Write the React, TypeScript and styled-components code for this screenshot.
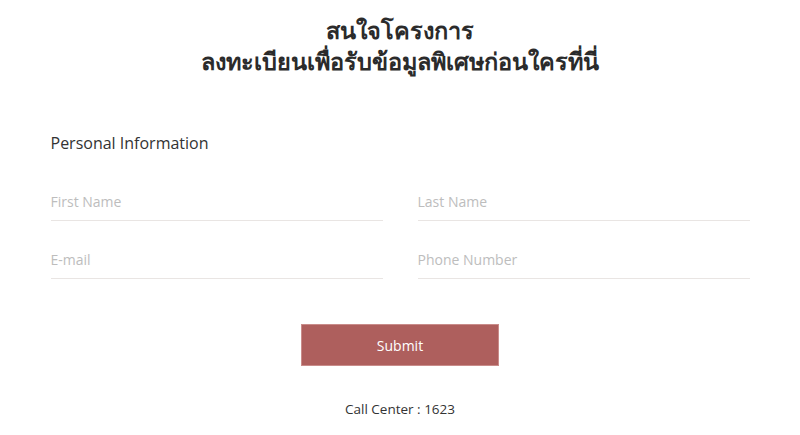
import { createGlobalStyle } from 'styled-components';
import styled from 'styled-components';

const GlobalStyle = createGlobalStyle`
    html, body {
        margin: 0;
        padding: 0;
        background: #ffffff;
    }
    body {
        font-family: 'Open Sans', 'Noto Sans', sans-serif;
        color: #333333;
    }
`;

const Page = styled.div`
    width: 800px;
    height: 435px;
    display: flex;
    flex-direction: column;
    align-items: center;
    box-sizing: border-box;
    padding-top: 15px;
`;

const Title = styled.h1`
    margin: 0;
    font-family: 'Noto Sans', 'DejaVu Sans', sans-serif;
    font-size: 23.5px;
    font-weight: 700;
    line-height: 31px;
    text-align: center;
    color: #2b2b2b;
`;

const Form = styled.form`
    width: 699px;
    margin-top: 56px;
    display: flex;
    flex-direction: column;
`;

const SectionLabel = styled.div`
    font-size: 16px;
    line-height: 20px;
    color: #333333;
`;

const Grid = styled.div`
    margin-top: 30px;
    display: grid;
    grid-template-columns: 1fr 1fr;
    column-gap: 35px;
    row-gap: 20px;
`;

const Input = styled.input`
    display: block;
    width: 100%;
    box-sizing: border-box;
    border: none;
    border-bottom: 1px solid #e9e5e3;
    padding: 9px 0 8px;
    font-family: 'Open Sans', sans-serif;
    font-size: 14px;
    line-height: 20px;
    color: #333;
    outline: none;
    background: transparent;

    &::placeholder {
        color: #bdbdbd;
    }
`;

const SubmitButton = styled.button`
    align-self: center;
    margin-top: 45px;
    width: 198px;
    height: 42px;
    border: 1px solid #c98c8a;
    background: #ae5f5d;
    color: #ffffff;
    font-family: 'Open Sans', sans-serif;
    font-size: 14px;
    font-weight: 500;
    cursor: pointer;
`;

const CallCenter = styled.div`
    margin-top: 34px;
    font-size: 13.5px;
    color: #333333;
    text-align: center;
`;

const fields = ['First Name', 'Last Name', 'E-mail', 'Phone Number'];

export default function App() {
    return (
        <>
            <GlobalStyle />
            <Page>
                <Title>
                    สนใจโครงการ
                    <br />
                    ลงทะเบียนเพื่อรับข้อมูลพิเศษก่อนใครที่นี่
                </Title>
                <Form onSubmit={(e) => e.preventDefault()}>
                    <SectionLabel>Personal Information</SectionLabel>
                    <Grid>
                        {fields.map((f) => (
                            <Input key={f} placeholder={f} />
                        ))}
                    </Grid>
                    <SubmitButton type='submit'>Submit</SubmitButton>
                </Form>
                <CallCenter>Call Center : 1623</CallCenter>
            </Page>
        </>
    );
}
